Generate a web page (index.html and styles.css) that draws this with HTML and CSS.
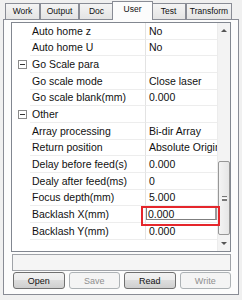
FILE: index.html
```html
<!DOCTYPE html>
<html lang="en">
<head>
    <meta charset="UTF-8">
    <title>User</title>
    <link rel="stylesheet" href="styles.css">
</head>
<body>
    <div class="tabs">
        <div class="tab w-work">Work</div>
        <div class="tab w-output">Output</div>
        <div class="tab w-doc">Doc</div>
        <div class="tab w-user on">User</div>
        <div class="tab w-test">Test</div>
        <div class="tab w-transform">Transform</div>
    </div>

    <div class="panel">
        <div class="grid">
            <div class="rows">
                <div class="row"><span class="gutter"></span><span class="name">Auto home z</span><span class="value">No</span></div>
                <div class="row"><span class="gutter"></span><span class="name">Auto home U</span><span class="value">No</span></div>
                <div class="row cat"><span class="gutter"><i class="minus"></i></span><span class="name">Go Scale para</span><span class="value"></span></div>
                <div class="row"><span class="gutter"></span><span class="name">Go scale mode</span><span class="value">Close laser</span></div>
                <div class="row"><span class="gutter"></span><span class="name">Go scale blank(mm)</span><span class="value">0.000</span></div>
                <div class="row cat"><span class="gutter"><i class="minus"></i></span><span class="name">Other</span><span class="value"></span></div>
                <div class="row"><span class="gutter"></span><span class="name">Array processing</span><span class="value">Bi-dir Array</span></div>
                <div class="row"><span class="gutter"></span><span class="name">Return position</span><span class="value">Absolute Origin</span></div>
                <div class="row"><span class="gutter"></span><span class="name">Delay before feed(s)</span><span class="value">0.000</span></div>
                <div class="row"><span class="gutter"></span><span class="name">Dealy after feed(ms)</span><span class="value">0</span></div>
                <div class="row"><span class="gutter"></span><span class="name">Focus depth(mm)</span><span class="value">5.000</span></div>
                <div class="row"><span class="gutter"></span><span class="name">Backlash X(mm)</span><span class="value editing"><span class="edit">0.000</span><b class="mark"></b></span></div>
                <div class="row"><span class="gutter"></span><span class="name">Backlash Y(mm)</span><span class="value">0.000</span></div>
            </div>
            <div class="sb">
                <div class="sb-btn"><i class="arr up"></i></div>
                <div class="sb-track">
                    <div class="thumb"><i class="grip"></i></div>
                </div>
                <div class="sb-btn"><i class="arr down"></i></div>
            </div>
        </div>

        <div class="status"></div>

        <div class="btns">
            <button class="btn">Open</button>
            <button class="btn" disabled>Save</button>
            <button class="btn">Read</button>
            <button class="btn" disabled>Write</button>
        </div>
    </div>
</body>
</html>
```

FILE: styles.css
```css
*{
    padding: 0;
    margin: 0;
    box-sizing: border-box;
    font-family: 'Liberation Sans', Arial, sans-serif;
    color: #111;
}
body{
    width: 242px;
    height: 300px;
    background: #f0f0f0;
    overflow: hidden;
}

/* tabs */
.tabs{
    display: flex;
    align-items: flex-end;
    height: 19px;
    padding-left: 5px;
}
.tab{
    height: 16px;
    border: 1px solid #898c95;
    border-bottom: 0;
    background: linear-gradient(#f4f4f4, #e4e4e4);
    font-size: 8.5px;
    line-height: 15px;
    text-align: center;
    white-space: nowrap;
}
.w-work{ width: 35px; }
.w-output{ width: 39px; }
.w-doc{ width: 35px; }
.w-user{ width: 37px; }
.w-test{ width: 35px; }
.w-transform{ width: 46px; }
.tab.on{
    position: relative;
    z-index: 1;
    height: 19px;
    width: 41px;
    margin: 0 -2px -1px -2px;
    background: #fcfcfc;
    line-height: 14px;
}

/* panel */
.panel{
    display: flex;
    flex-direction: column;
    width: 236px;
    height: 276px;
    margin-left: 3px;
    padding: 2px 7px 5px 7px;
    border: 1px solid #898c95;
    background: #fcfcfc;
}
.grid{
    display: flex;
    height: 231px;
    border: 1px solid #828790;
    background: #fff;
}
.rows{
    width: 205px;
}
.row{
    display: flex;
    height: 16.67px;
    font-size: 10.5px;
}
.gutter{
    width: 18px;
    display: flex;
    align-items: center;
    justify-content: center;
}
.name, .value{
    display: flex;
    align-items: center;
    border-bottom: 1px solid #ededed;
    white-space: nowrap;
    overflow: hidden;
}
.name{
    width: 116px;
    padding-left: 2px;
    border-right: 1px solid #e3e3e3;
}
.value{
    width: 71px;
    padding-left: 3px;
}
.minus{
    position: relative;
    width: 9px;
    height: 9px;
    margin-left: 3px;
    border: 1px solid #8a8a8a;
    background: #fff;
}
.minus::after{
    content: '';
    position: absolute;
    left: 1px;
    top: 3px;
    width: 5px;
    height: 1px;
    background: #333;
}

/* edited cell */
.editing{
    position: relative;
    overflow: visible;
    padding: 1px 0 2px 0;
}
.edit{
    display: flex;
    align-items: center;
    width: 100%;
    height: 100%;
    padding-left: 1px;
    border: 1px solid #7f7f7f;
    border-right: 2px solid #9a9a9a;
    background: #fff;
}
.mark{
    position: absolute;
    left: -5px;
    top: 0;
    width: 79px;
    height: 20px;
    border: 2px solid #e5262b;
}

/* scrollbar */
.sb{
    display: flex;
    flex-direction: column;
    width: 13px;
    background: #f3f3f3;
    border-left: 1px solid #ececec;
}
.sb-btn{
    height: 15px;
    display: flex;
    align-items: center;
    justify-content: center;
}
.arr{
    width: 0;
    height: 0;
    border-left: 3px solid transparent;
    border-right: 3px solid transparent;
}
.arr.up{ border-bottom: 3px solid #555; }
.arr.down{ border-top: 3px solid #555; }
.sb-track{
    flex: 1;
    display: flex;
    flex-direction: column;
    justify-content: flex-end;
}
.thumb{
    display: flex;
    align-items: center;
    justify-content: center;
    height: 74px;
    margin: 0 0 1px 0;
    border: 1px solid #979797;
    border-radius: 2px;
    background: linear-gradient(90deg, #f4f4f4, #e6e6e6);
}
.grip{
    width: 5px;
    height: 5px;
    border-top: 1px solid #777;
    border-bottom: 1px solid #777;
    background: linear-gradient(#fff 1px, #777 1px, #777 2px, #fff 2px);
    background-size: 5px 3px;
    background-position: 0 1px;
    background-repeat: no-repeat;
}

/* status + buttons */
.status{
    height: 17px;
    margin: 2px 0 0 1px;
    border: 1px solid #a0a3a8;
    background: #f5f5f5;
}
.btns{
    display: flex;
    gap: 4px;
    height: 17px;
    margin: 1px 0 0 2px;
}
.btn{
    flex: 1;
    border: 1px solid #707070;
    border-radius: 3px;
    background: linear-gradient(#f2f2f2, #ebebeb 50%, #dddddd 50%, #cfcfcf);
    font-size: 9px;
}
.btn:disabled{
    border-color: #adb2b5;
    background: #f4f4f4;
    color: #8f8f8f;
}
```
